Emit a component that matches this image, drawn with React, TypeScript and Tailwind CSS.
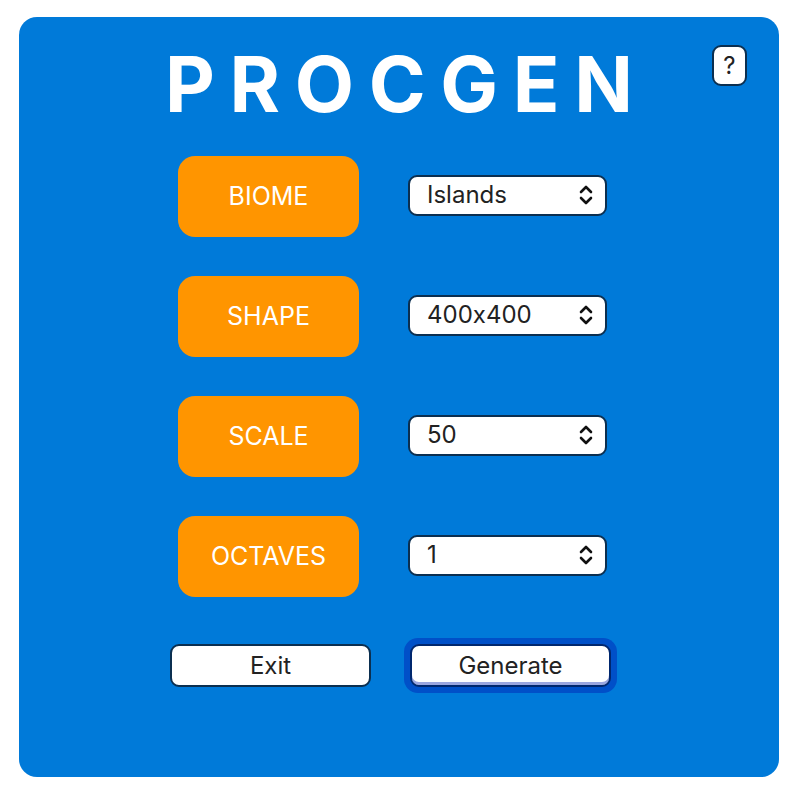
import React from 'react';

const font = { fontFamily: 'Inter, "Noto Sans", sans-serif' };

const Chevrons = () => (
  <svg width="14" height="24" viewBox="0 0 14 24" fill="none" stroke="#111" strokeWidth="2.6" strokeLinecap="round" strokeLinejoin="round">
    <path d="M2 9 L7 4 L12 9" />
    <path d="M2 15 L7 20 L12 15" />
  </svg>
);

const rows = [
  { label: 'BIOME', value: 'Islands' },
  { label: 'SHAPE', value: '400x400' },
  { label: 'SCALE', value: '50' },
  { label: 'OCTAVES', value: '1' },
];

export default function App() {
  return (
    <div className="w-[798px] h-[806px] bg-white overflow-hidden [font-feature-settings:'calt'_0]" style={font}>
      <div className="ml-[19px] mt-[17px] w-[760px] h-[760px] rounded-[18px] bg-[#007ad9] relative">
        <button className="absolute left-[693px] top-[28px] w-[35px] h-[41px] rounded-[9px] bg-white border-2 border-[#0b2f50] text-[24px] text-[#222] flex items-center justify-center">
          ?
        </button>

        <h1 className="pt-[22px] text-center text-white font-bold text-[77px] leading-[90px] tracking-[0.19em] pl-[0.19em]">
          PROCGEN
        </h1>

        <div className="mt-[27px] pl-[159px] flex flex-col gap-[39px]">
          {rows.map(r => (
            <div key={r.label} className="flex items-center gap-[49px]">
              <div className="w-[181px] h-[81px] rounded-[17px] bg-[#ff9500] flex items-center justify-center text-white text-[25px]">
                {r.label}
              </div>
              <div className="w-[199px] h-[41px] -mt-[3px] rounded-[9px] bg-white border-2 border-[#0b2f50] flex items-center justify-between pl-[17px] pr-[12px] text-[24px] text-[#222]">
                <span>{r.value}</span>
                <Chevrons />
              </div>
            </div>
          ))}
        </div>

        <div className="mt-[47px] pl-[151px] flex items-center gap-[39px]">
          <button className="w-[201px] h-[43px] rounded-[9px] bg-white border-2 border-[#0b2f50] text-[24px] text-[#222]">
            Exit
          </button>
          <div className="p-[6px] -m-[6px] rounded-[14px] bg-[#0050c8]">
            <button className="w-[201px] h-[43px] rounded-[9px] bg-white border-2 border-[#00276e] text-[24px] text-[#222] shadow-[inset_0_-3px_0_#9aa6e0]">
              Generate
            </button>
          </div>
        </div>
      </div>
    </div>
  );
}
